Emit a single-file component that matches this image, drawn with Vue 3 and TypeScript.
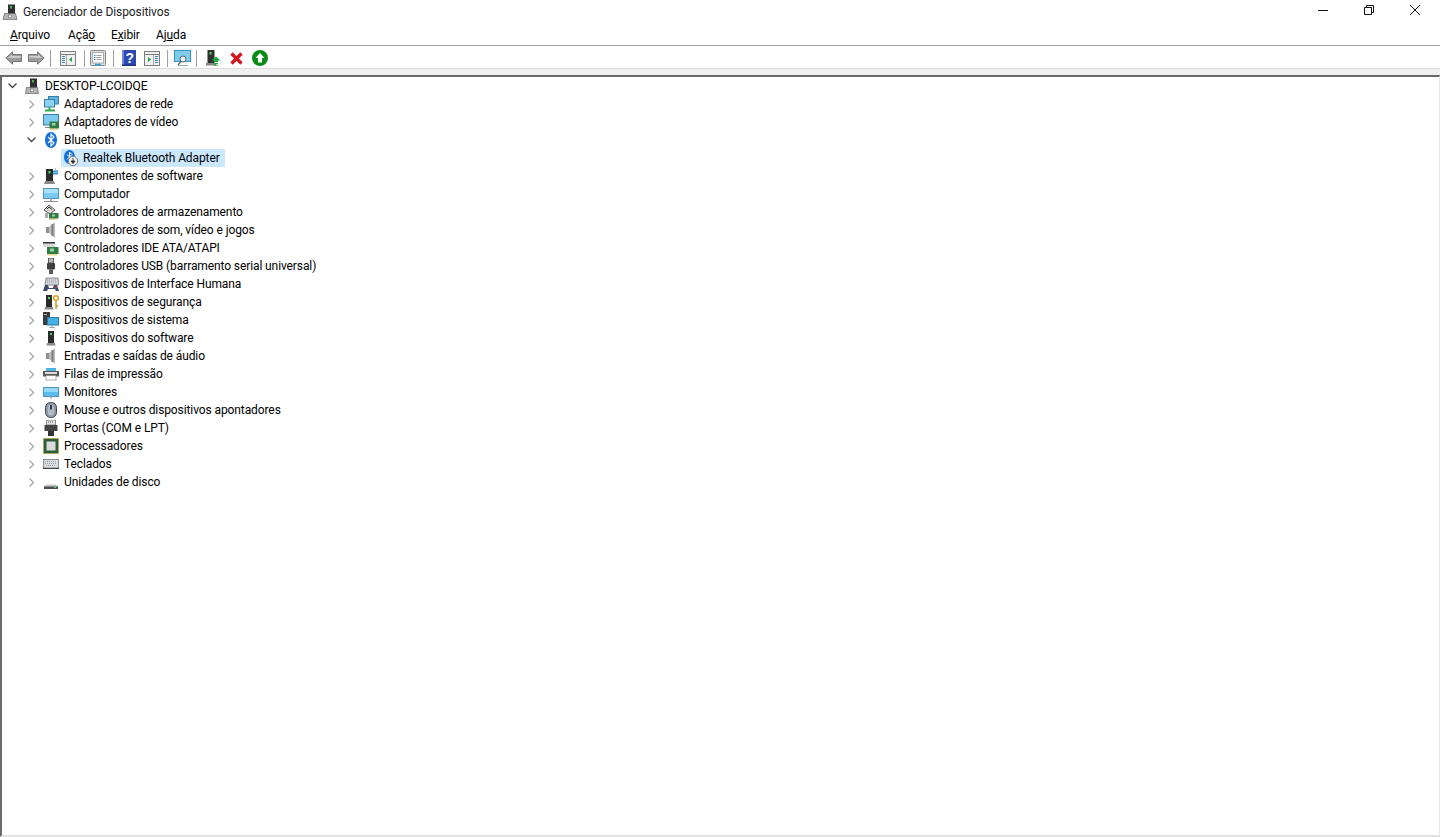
<script setup lang="ts">
interface Row {
  label: string
  icon: string
  open?: boolean
  selected?: boolean
  level: number
}

const rows: Row[] = [
  { label: 'Adaptadores de rede', icon: 'network', level: 1 },
  { label: 'Adaptadores de vídeo', icon: 'video', level: 1 },
  { label: 'Bluetooth', icon: 'bluetooth', level: 1, open: true },
  { label: 'Realtek Bluetooth Adapter', icon: 'btdisabled', level: 2, selected: true },
  { label: 'Componentes de software', icon: 'component', level: 1 },
  { label: 'Computador', icon: 'computer', level: 1 },
  { label: 'Controladores de armazenamento', icon: 'storage', level: 1 },
  { label: 'Controladores de som, vídeo e jogos', icon: 'speaker', level: 1 },
  { label: 'Controladores IDE ATA/ATAPI', icon: 'ide', level: 1 },
  { label: 'Controladores USB (barramento serial universal)', icon: 'usb', level: 1 },
  { label: 'Dispositivos de Interface Humana', icon: 'hid', level: 1 },
  { label: 'Dispositivos de segurança', icon: 'security', level: 1 },
  { label: 'Dispositivos de sistema', icon: 'system', level: 1 },
  { label: 'Dispositivos do software', icon: 'tower', level: 1 },
  { label: 'Entradas e saídas de áudio', icon: 'speaker', level: 1 },
  { label: 'Filas de impressão', icon: 'printer', level: 1 },
  { label: 'Monitores', icon: 'monitor', level: 1 },
  { label: 'Mouse e outros dispositivos apontadores', icon: 'mouse', level: 1 },
  { label: 'Portas (COM e LPT)', icon: 'port', level: 1 },
  { label: 'Processadores', icon: 'cpu', level: 1 },
  { label: 'Teclados', icon: 'keyboard', level: 1 },
  { label: 'Unidades de disco', icon: 'disk', level: 1 },
]
</script>

<template>
  <div class="window">
    <header class="titlebar">
      <svg class="app-icon" width="16" height="16" viewBox="0 0 16 16">
        <rect x="6" y="0.500" width="7" height="9.500" fill="#2f2f2f" />
        <rect x="8" y="2" width="2" height="2.500" fill="#4caf50" />
        <path d="M2.500 9.500h11l1.500 6H1z" fill="#b5b5b5" stroke="#666" stroke-width=".7" />
        <rect x="6.500" y="11" width="3" height="2.500" fill="#fff" stroke="#555" stroke-width=".5" />
      </svg>
      <span class="title">Gerenciador de Dispositivos</span>
      <div class="controls">
        <svg width="10" height="10" viewBox="0 0 10 10"><path d="M0 5.500h10" stroke="#111" /></svg>
        <svg width="10" height="10" viewBox="0 0 10 10" fill="none"><path d="M.5 2.500h7v7h-7zM2.500 2.500v-2h7v7h-2" stroke="#111" /></svg>
        <svg width="10" height="10" viewBox="0 0 10 10"><path d="M0 0l10 10M10 0L0 10" stroke="#111" /></svg>
      </div>
    </header>

    <nav class="menubar">
      <span class="m1"><u>A</u>rquivo</span>
      <span class="m2">Açã<u>o</u></span>
      <span class="m3">E<u>x</u>ibir</span>
      <span>Aj<u>u</u>da</span>
    </nav>

    <div class="toolbar">
      <span class="tb">
        <svg width="17" height="14" viewBox="0 0 17 14"><path d="M.8 7L7.500.8v2.700h9v7h-9v2.700z" fill="#9c9c9c" stroke="#7a7a7a" /><path d="M3 7l4-3.600V5h9v1.500z" fill="#cfcfcf" /></svg>
      </span>
      <span class="tb">
        <svg width="17" height="14" viewBox="0 0 17 14"><path d="M16.200 7L9.500.8v2.700h-9v7h9v2.700z" fill="#9c9c9c" stroke="#7a7a7a" /><path d="M14 7l-4-3.600V5H1v1.500z" fill="#cfcfcf" /></svg>
      </span>
      <i class="sep s1"></i>
      <span class="tb">
        <svg width="16" height="16" viewBox="0 0 16 16">
          <rect x=".5" y="1.500" width="15" height="14" fill="#f0f0f0" stroke="#7d7d7d" />
          <path d="M1 4.500h14" stroke="#7d7d7d" />
          <path d="M2 6.500h3M2 8.500h3M2 10.500h3M2 12.500h3" stroke="#3f87b5" />
          <path d="M6.500 5v10" stroke="#aaa" />
          <path d="M12 7v5L9 9.500z" fill="#21a04a" />
        </svg>
      </span>
      <i class="sep s2"></i>
      <span class="tb">
        <svg width="16" height="16" viewBox="0 0 16 16">
          <rect x=".5" y=".5" width="15" height="15" rx="1" fill="#e0e0e0" stroke="#858585" />
          <rect x="2.500" y="2.500" width="11" height="10.500" fill="#fff" stroke="#aaa" />
          <path d="M6.500 5.500h5M6.500 7.500h5M6.500 9.500h5" stroke="#999" />
          <path d="M4 5.500h1.500M4 7.500h1.500M4 9.500h1.500" stroke="#2a8fd0" />
          <path d="M5 14.500h6" stroke="#2aa0e0" stroke-width="1.500" />
        </svg>
      </span>
      <i class="sep s3"></i>
      <span class="tb">
        <svg width="14" height="16" viewBox="0 0 14 16">
          <rect width="14" height="16" fill="#2d49b2" />
          <rect width="2" height="16" fill="#7088dc" />
          <rect y="14.500" width="14" height="1.500" fill="#1e3487" />
          <text x="3.500" y="13" class="q">?</text>
        </svg>
      </span>
      <span class="tb">
        <svg width="16" height="16" viewBox="0 0 16 16">
          <rect x=".5" y="1.500" width="15" height="14" fill="#f0f0f0" stroke="#7d7d7d" />
          <path d="M1 4.500h14" stroke="#7d7d7d" />
          <path d="M11 6.500h3M11 8.500h3M11 10.500h3M11 12.500h3" stroke="#3f87b5" />
          <path d="M9.500 5v10" stroke="#aaa" />
          <path d="M4 7v5l3-2.500z" fill="#21a04a" />
        </svg>
      </span>
      <i class="sep s4"></i>
      <span class="tb">
        <svg width="17" height="16" viewBox="0 0 17 16">
          <rect x=".5" y=".5" width="16" height="11" fill="#7fcbee" stroke="#3b93c4" />
          <path d="M4 15.500h10" stroke="#9ab" />
          <circle cx="9" cy="9" r="3" fill="#e4f4f8" stroke="#5d6a75" />
          <path d="M7 11.500L4 15" stroke="#5d6a75" stroke-width="1.300" />
        </svg>
      </span>
      <i class="sep s5"></i>
      <span class="tb">
        <svg width="15" height="16" viewBox="0 0 15 16">
          <rect x="1.500" width="7" height="13" fill="#2f2f2f" />
          <rect x="3.500" y="2" width="2" height="2.500" fill="#4cd964" />
          <path d="M0 13h10v2.500H0z" fill="#868686" />
          <path d="M5.500 10.500l4.500-4 4.500 4H12V12H8v-1.500z" fill="#1ea83c" />
          <path d="M8 13.500h4M8 15.200h4" stroke="#1ea83c" />
        </svg>
      </span>
      <span class="tb">
        <svg width="13" height="13" viewBox="0 0 13 13"><path d="M1.500 1.500l10 10M11.500 1.500l-10 10" stroke="#d9121f" stroke-width="3.200" /></svg>
      </span>
      <span class="tb">
        <svg width="16" height="16" viewBox="0 0 16 16">
          <circle cx="8" cy="8" r="8" fill="#0b8a17" />
          <path d="M8 3l4.500 5H10v4.500H6V8H3.500z" fill="#fff" />
        </svg>
      </span>
    </div>

    <div class="band"></div>

    <main class="tree">
      <div class="row root">
        <svg class="chev" width="9" height="6" viewBox="0 0 9 6"><path d="M.5.500l4 4 4-4" fill="none" stroke="#444" stroke-width="1.300" /></svg>
        <svg class="ico" width="16" height="16" viewBox="0 0 16 16">
          <rect x="5" y=".5" width="7" height="9.500" fill="#2f2f2f" />
          <rect x="7" y="2" width="2" height="2.500" fill="#4caf50" />
          <path d="M1.500 9.500h11l1 6H.5z" fill="#b5b5b5" stroke="#666" stroke-width=".7" />
          <rect x="5.500" y="11" width="3" height="2.500" fill="#fff" stroke="#555" stroke-width=".5" />
        </svg>
        <span class="label">DESKTOP-LCOIDQE</span>
      </div>

      <div
        v-for="row in rows"
        :key="row.label"
        class="row"
        :class="row.level === 2 ? 'child' : 'group'"
      >
        <template v-if="row.level === 1">
          <svg v-if="row.open" class="chev" width="9" height="6" viewBox="0 0 9 6"><path d="M.5.500l4 4 4-4" fill="none" stroke="#444" stroke-width="1.300" /></svg>
          <svg v-else class="chev closed" width="6" height="9" viewBox="0 0 6 9"><path d="M.5.500l4 4-4 4" fill="none" stroke="#a6a6a6" stroke-width="1.300" /></svg>
        </template>
        <div class="item" :class="{ selected: row.selected }">
          <svg class="ico" width="16" height="16" viewBox="0 0 16 16">
            <g v-if="row.icon === 'network'">
              <rect x="5.500" y=".5" width="10" height="7.500" fill="#5bb6e6" stroke="#3b7fa8" />
              <rect x="1.500" y="3.500" width="10" height="7.500" fill="#8dd2f2" stroke="#3b7fa8" />
              <path d="M6.500 11v2.500M2 14.500h10" stroke="#2fa84f" stroke-width="2" />
            </g>
            <g v-else-if="row.icon === 'video'">
              <rect x=".5" y=".5" width="15" height="10.500" fill="#7ccaf0" stroke="#3b7fa8" />
              <path d="M2 13.500h5" stroke="#889" />
              <rect x="6.500" y="7.500" width="9.500" height="7" fill="#2f7d44" />
              <path d="M8 14.500V16M10 14.500V16M12 14.500V16M14 14.500V16" stroke="#d9a520" />
              <rect x="9" y="9" width="3.500" height="2.500" fill="#9ccfa8" />
            </g>
            <g v-else-if="row.icon === 'bluetooth'">
              <ellipse cx="8" cy="8" rx="6" ry="8" fill="#1470dc" />
              <path d="M5 5l6 6-3 3V2l3 3-6 6" fill="none" stroke="#fff" stroke-width="1.100" />
            </g>
            <g v-else-if="row.icon === 'btdisabled'">
              <ellipse cx="6.500" cy="7" rx="5.500" ry="7" fill="#1470dc" />
              <path d="M4 4.500l5 5-2.500 2.500V2l2.500 2.500-5 5" fill="none" stroke="#fff" stroke-width="1" />
              <circle cx="10" cy="11" r="4.700" fill="#eee" stroke="#777" />
              <path d="M10 8v3M8 11h4l-2 2.500z" fill="#222" stroke="#222" stroke-width=".8" />
            </g>
            <g v-else-if="row.icon === 'component'">
              <rect x="3" y="1" width="7" height="12" fill="#2b2b2b" />
              <rect x="5.500" y="3" width="2" height="2.500" fill="#4cd964" />
              <path d="M2 13h9l1 3H1z" fill="#8a8a8a" />
              <path d="M10 2.500h5v4h-5z" fill="#3f8fd6" />
              <path d="M12.500 0v2M10 4.500h5" stroke="#7fc4f2" />
            </g>
            <g v-else-if="row.icon === 'computer'">
              <rect x=".5" y="2.500" width="15" height="10" fill="#7ccaf0" stroke="#4a94bd" />
              <rect x="1" y="3" width="14" height="4" fill="#a8e0f8" />
              <path d="M8 12.500V15" stroke="#aab" stroke-width="2" />
              <path d="M1 15.500h14" stroke="#8a8f99" />
            </g>
            <g v-else-if="row.icon === 'monitor'">
              <rect x=".5" y="3.500" width="15" height="9" fill="#5dbcec" stroke="#4a94bd" />
              <rect x="1" y="4" width="14" height="4" fill="#96d9f6" />
              <path d="M8 12.500v2" stroke="#aab" stroke-width="2" />
            </g>
            <g v-else-if="row.icon === 'storage'">
              <path d="M1 6l5-5 6 5-5 4z" fill="#d6d6d6" stroke="#555" />
              <path d="M4 5l2-2 3 2.500" fill="none" stroke="#333" />
              <rect x="6" y="9" width="9.500" height="5.500" fill="#2f7d44" />
              <path d="M7 14.500V16M9 14.500V16M11 14.500V16M13 14.500V16" stroke="#d9a520" />
              <rect x="9" y="10.500" width="3" height="2" fill="#9ccfa8" />
              <path d="M2 9h3v5H2z" fill="#aaa" />
            </g>
            <g v-else-if="row.icon === 'speaker'">
              <path d="M3 5h3v6H3z" fill="#8f8f8f" />
              <path d="M6 5l6-5v16l-6-5z" fill="#bdbdbd" />
              <path d="M9.500 2v12" stroke="#7e7e7e" stroke-width="2" />
            </g>
            <g v-else-if="row.icon === 'ide'">
              <rect x="0" y="2" width="12" height="5" fill="#d8d8d8" />
              <rect x="0" y="2" width="12" height="1.500" fill="#333" />
              <rect x="4" y="7" width="11.500" height="7" fill="#2f7d44" />
              <rect x="7" y="8.500" width="4" height="3" fill="#9ccfa8" />
              <path d="M5 14v1.500M7 14v1.500M9 14v1.500M11 14v1.500M13 14v1.500" stroke="#d9a520" />
            </g>
            <g v-else-if="row.icon === 'usb'">
              <rect x="5.500" y="0" width="5" height="5" fill="#b8b8b8" stroke="#444" stroke-width=".8" />
              <rect x="4" y="5" width="8" height="6.500" rx="1" fill="#3f3f3f" />
              <rect x="6" y="11.500" width="4" height="4.500" fill="#5c5c5c" />
            </g>
            <g v-else-if="row.icon === 'hid'">
              <path d="M3 2h12l1 7H2z" fill="#d5d5d5" stroke="#667" stroke-width=".7" />
              <path d="M4 4h10M4 6h10" stroke="#8898aa" stroke-dasharray="1 1" />
              <path d="M0 15l2-6h3l1 3h4l1-3h3l2 6h-3l-1-2H5l-1 2z" fill="#3b4a6b" />
              <circle cx="13" cy="11" r="1" fill="#d33" />
            </g>
            <g v-else-if="row.icon === 'security'">
              <rect x="3" y="1" width="6" height="12" fill="#2b2b2b" />
              <rect x="5" y="3" width="2" height="2" fill="#4cd964" />
              <path d="M2 13h8l.5 2.500h-9z" fill="#8a8a8a" />
              <circle cx="13" cy="4" r="2.300" fill="none" stroke="#d9a520" stroke-width="1.600" />
              <path d="M13 7v8M13 12h2" stroke="#c99618" stroke-width="1.400" />
            </g>
            <g v-else-if="row.icon === 'system'">
              <rect x="0" y="0" width="7" height="13" fill="#3a3a3a" />
              <rect x="1" y="2" width="3" height="1" fill="#bbb" />
              <rect x="4.500" y="5.500" width="11" height="7.500" fill="#47b1e6" stroke="#2b7cab" />
              <path d="M9 13v2M6.500 15.500h5" stroke="#99a" />
            </g>
            <g v-else-if="row.icon === 'tower'">
              <rect x="5" y="1" width="6" height="12" fill="#2b2b2b" />
              <rect x="7" y="3" width="2" height="2" fill="#4cd964" />
              <path d="M4 13h8l.5 2.500h-9z" fill="#8a8a8a" />
            </g>
            <g v-else-if="row.icon === 'printer'">
              <rect x="3" y="2" width="10" height="3.500" fill="#4db3e6" />
              <rect x="0" y="5" width="16" height="5.500" fill="#555" />
              <rect x="2" y="6" width="12" height="2" fill="#ddd" />
              <rect x="3" y="9.500" width="10" height="4.500" fill="#fff" stroke="#888" stroke-width=".7" />
            </g>
            <g v-else-if="row.icon === 'mouse'">
              <rect x="2.500" y=".5" width="11" height="15" rx="5" fill="#8d99a8" stroke="#3f4856" />
              <rect x="5" y="2.500" width="6" height="11" rx="3" fill="#b3bdca" />
              <path d="M8 3v4.500" stroke="#2a3d55" stroke-width="2" />
            </g>
            <g v-else-if="row.icon === 'port'">
              <rect x="3.500" y="0" width="9" height="5" fill="#e4e4e4" stroke="#666" stroke-width=".7" />
              <path d="M5 2h6" stroke="#555" stroke-dasharray="1 1" />
              <rect x="1.500" y="5" width="13" height="6" fill="#444" />
              <rect x="5" y="11" width="6" height="5" fill="#333" />
            </g>
            <g v-else-if="row.icon === 'cpu'">
              <rect x=".5" y=".5" width="15" height="15" fill="#2b5f3b" stroke="#c9a020" stroke-dasharray="1 1" />
              <rect x="3.500" y="3.500" width="9" height="9" fill="#dcdcdc" />
            </g>
            <g v-else-if="row.icon === 'keyboard'">
              <rect x=".5" y="3.500" width="15" height="8.500" fill="#e0e0e0" stroke="#6a7480" stroke-width=".8" />
              <path d="M2 5.500h12M2 7.500h12M3 9.500h10" stroke="#8797a8" stroke-dasharray="1 1" />
              <path d="M0 12.500h16" stroke="#444" />
            </g>
            <g v-else-if="row.icon === 'disk'">
              <path d="M3 10.500h10l2 2v2.500H1v-2.500z" fill="#c8c8c8" />
              <path d="M1 12.500h14V15H1z" fill="#4a4f55" />
              <rect x="11" y="13" width="2" height="1" fill="#4cd964" />
            </g>
          </svg>
          <span class="label">{{ row.label }}</span>
        </div>
      </div>
    </main>
  </div>
</template>

<style scoped>
.window {
  width: 1440px;
  height: 837px;
  display: flex;
  flex-direction: column;
  background: #fff;
  color: #000;
  font-family: Roboto, "Noto Sans", sans-serif;
  font-size: 12px;
  letter-spacing: -0.1px;
  overflow: hidden;
}

.titlebar {
  height: 24px;
  display: flex;
  align-items: center;
  padding-left: 2px;
  flex-shrink: 0;
}

.app-icon {
  margin-right: 5px;
}

.title {
  color: #222;
}

.controls {
  margin-left: auto;
  display: flex;
  gap: 36px;
  padding-right: 20px;
  margin-top: -4px;
}

.menubar {
  height: 21px;
  display: flex;
  align-items: center;
  padding-left: 10px;
  border-bottom: 1px solid #a0a0a0;
  flex-shrink: 0;
}

.m1 { width: 58px; }
.m2 { width: 43px; }
.m3 { width: 45px; }

.toolbar {
  height: 22px;
  box-sizing: border-box;
  display: flex;
  align-items: center;
  padding: 2px 0 0 2px;
  flex-shrink: 0;
}

.tb {
  width: 23px;
  height: 20px;
  display: flex;
  align-items: center;
  justify-content: center;
}

.sep {
  width: 1px;
  height: 17px;
  background: #a0a0a0;
}

.s1 { margin: 0 5px 0 2px; }
.s2 { margin: 0 1px 0 5px; }
.s3 { margin: 0 3px 0 4px; }
.s4 { margin: 0 3px 0 4px; }
.s5 { margin: 0 5px 0 2px; }

.band {
  height: 7px;
  background: #f0f0f0;
  border-top: 1px solid #dcdcdc;
  box-sizing: border-box;
  flex-shrink: 0;
}

.tree {
  flex: 1;
  border-top: 2px solid #696969;
  border-left: 2px solid #696969;
  border-right: 1px solid #e3e3e3;
  border-bottom: 2px solid #e3e3e3;
}

.row {
  height: 18px;
  display: flex;
  align-items: center;
  position: relative;
}

.root > .chev {
  margin: 0 8px 0 6px;
}

.root > .ico {
  margin-right: 4px;
}

.group > .chev {
  position: absolute;
  left: 25px;
}

.group > .chev.closed {
  left: 27px;
}

.group .item {
  margin-left: 41px;
}

.child .item {
  margin-left: 59px;
  padding: 0 5px 0 2px;
}

.item {
  height: 18px;
  display: flex;
  align-items: center;
}

.group .item .ico {
  margin-right: 5px;
}

.child .item .ico {
  margin-right: 4px;
}

.item.selected {
  background: #cce8ff;
}

.label {
  white-space: nowrap;
}

.q {
  font-family: "Liberation Sans", sans-serif;
  font-size: 14px;
  font-weight: 700;
  fill: #fff;
}
</style>
